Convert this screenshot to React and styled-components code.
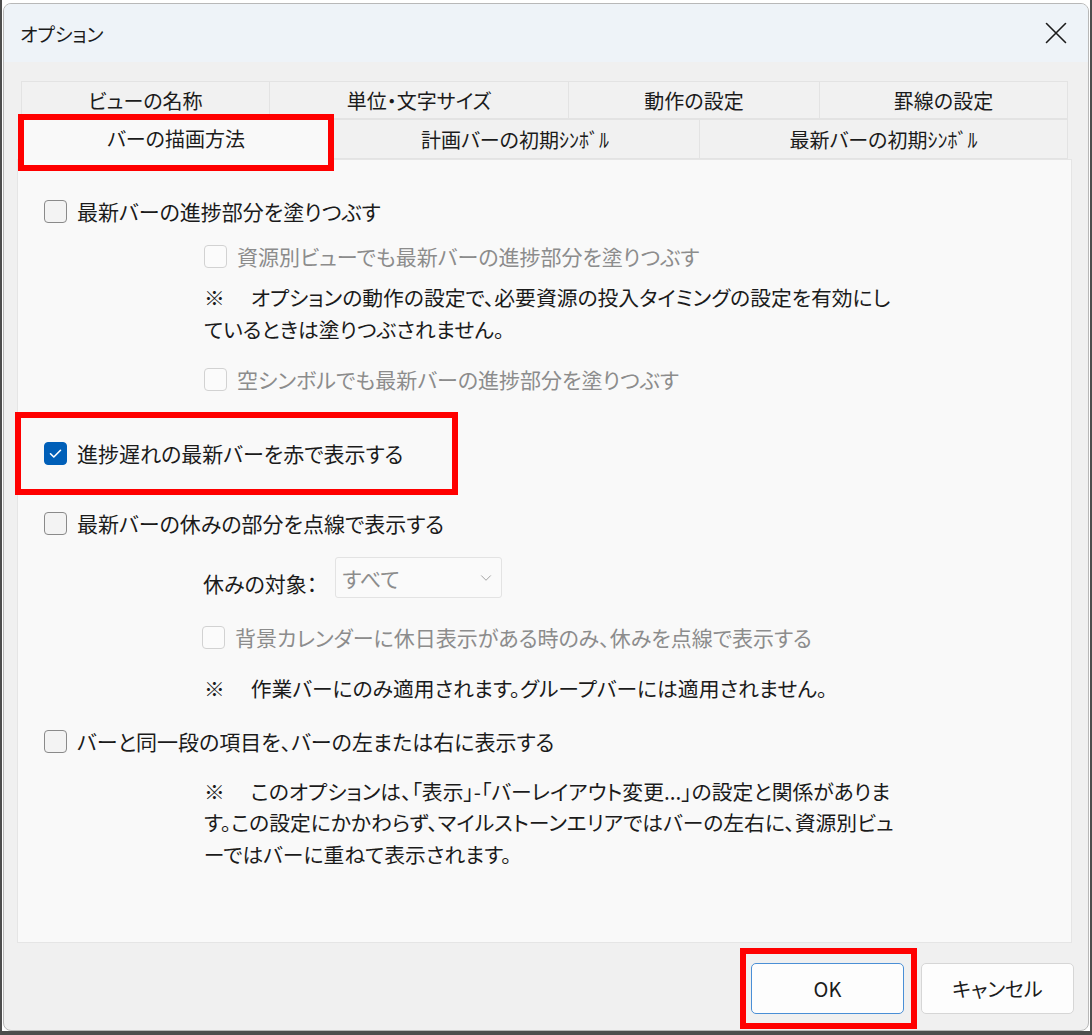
import styled, { createGlobalStyle } from "styled-components"
import { ChevronDown } from "lucide-react"

const GlobalStyle = createGlobalStyle`
    body {
        margin: 0;
        background: #ffffff;
        font-family: "Noto Sans CJK JP", "Noto Sans", sans-serif;
        font-feature-settings: "palt";
        color: #1b1b1b;
    }
`

const rowOneTabs = ["ビューの名称", "単位・文字サイズ", "動作の設定", "罫線の設定"]
const rowTwoTabs = ["バーの描画方法", "計画バーの初期ｼﾝﾎﾞﾙ", "最新バーの初期ｼﾝﾎﾞﾙ"]

function CheckIcon() {
    return (
        <svg width="23" height="23" viewBox="0 0 23 23">
            <path d="M6.5 11.8 L9.8 15 L16.5 8.3" fill="none" stroke="#ffffff" strokeWidth="1.6" strokeLinecap="round" strokeLinejoin="round" />
        </svg>
    )
}

function CheckRow({ label, checked, disabled, indent = 0, mt = 0, children }) {
    return (
        <Row $indent={indent} $mt={mt}>
            <Box $checked={checked} $disabled={disabled}>{checked && <CheckIcon />}</Box>
            <RowLabel $disabled={disabled}>{label}</RowLabel>
            {children}
        </Row>
    )
}

export default function App() {
    return (
        <>
            <GlobalStyle />
            <Frame>
                <Window>
                    <TitleBar>
                        <Title>オプション</Title>
                        <CloseButton>
                            <svg width="22" height="22" viewBox="0 0 22 22">
                                <path d="M1.5 1.5 L20.5 20.5 M20.5 1.5 L1.5 20.5" stroke="#1b1b1b" strokeWidth="1.6" strokeLinecap="round" />
                            </svg>
                        </CloseButton>
                    </TitleBar>
                    <Body>
                        <TabStrip>
                            <TabRow $cols="249px 299px 251px 1fr" $h={38}>
                                {rowOneTabs.map(t => <Tab key={t}>{t}</Tab>)}
                            </TabRow>
                            <TabRow $cols="310px 369px 1fr" $h={40}>
                                {rowTwoTabs.map((t, i) => (
                                    <Tab key={t} $active={i === 0}>
                                        {t}
                                        {i === 0 && <Mark $l={-2} $t={-3} $w={316} $h={57} />}
                                    </Tab>
                                ))}
                            </TabRow>
                        </TabStrip>
                        <Panel>
                            <CheckRow label="最新バーの進捗部分を塗りつぶす" />
                            <CheckRow label="資源別ビューでも最新バーの進捗部分を塗りつぶす" disabled indent={160} mt={22} />
                            <Note $indent={160} $mt={14}>
                                ※<Gap />オプションの動作の設定で、必要資源の投入タイミングの設定を有効にし<br />
                                ているときは塗りつぶされません。
                            </Note>
                            <CheckRow label="空シンボルでも最新バーの進捗部分を塗りつぶす" disabled indent={160} mt={23} />
                            <CheckRow label="進捗遅れの最新バーを赤で表示する" checked mt={51}>
                                <Mark $l={-29} $t={-30} $w={443} $h={83} />
                            </CheckRow>
                            <CheckRow label="最新バーの休みの部分を点線で表示する" mt={47} />
                            <SelectRow>
                                <SelectLabel>休みの対象：</SelectLabel>
                                <Select>
                                    すべて
                                    <ChevronDown size={18} strokeWidth={1.2} color="#9a9a9a" />
                                </Select>
                            </SelectRow>
                            <CheckRow label="背景カレンダーに休日表示がある時のみ、休みを点線で表示する" disabled indent={158} mt={28} />
                            <Note $indent={160} $mt={24}>
                                ※<Gap />作業バーにのみ適用されます。グループバーには適用されません。
                            </Note>
                            <CheckRow label="バーと同一段の項目を、バーの左または右に表示する" mt={25} />
                            <Note $indent={160} $mt={23}>
                                ※<Gap />このオプションは、「表示」-「バーレイアウト変更...」の設定と関係がありま<br />
                                す。この設定にかかわらず、マイルストーンエリアではバーの左右に、資源別ビュ<br />
                                ーではバーに重ねて表示されます。
                            </Note>
                        </Panel>
                    </Body>
                    <Footer>
                        <Button $primary>
                            OK
                            <Mark $l={-12} $t={-16} $w={177} $h={81} />
                        </Button>
                        <Button>キャンセル</Button>
                    </Footer>
                </Window>
            </Frame>
        </>
    )
}

const Frame = styled.div`
    width: 1092px;
    height: 1035px;
    box-sizing: border-box;
    display: flex;
    padding: 3px 1px 0 1px;
    border-left: 2px solid #4d4d4d;
    border-right: 2px solid #4d4d4d;
    border-bottom: 4px solid #4d4d4d;
`
const Window = styled.div`
    flex: 1;
    display: flex;
    flex-direction: column;
    background: #f0f0f0;
    border: 1px solid #b8b8b8;
    border-radius: 8px;
    overflow: hidden;
`
const TitleBar = styled.div`
    height: 58px;
    flex: none;
    display: flex;
    align-items: center;
    justify-content: space-between;
    padding: 0 21px 0 16px;
    background: #eef3f8;
`
const Title = styled.div`
    font-size: 19px;
`
const CloseButton = styled.div`
    width: 22px;
    height: 22px;
    display: flex;
`
const Body = styled.div`
    flex: none;
    padding: 19px 16px 0 13px;
`
const TabStrip = styled.div`
    display: flex;
    flex-direction: column;
`
const TabRow = styled.div`
    display: grid;
    grid-template-columns: ${p => p.$cols};
    height: ${p => p.$h}px;
    margin: 0 4px;
`
const Tab = styled.div`
    position: relative;
    display: flex;
    align-items: center;
    justify-content: center;
    font-size: 20px;
    white-space: nowrap;
    background: ${p => p.$active ? "#f9f9f9" : "#f1f1f1"};
    border: 1px solid #e3e3e3;
    border-bottom: ${p => p.$active ? "none" : "1px solid #e3e3e3"};
    margin: ${p => p.$active ? "-3px -2px -1px -2px" : "0 0 0 -1px"};
    z-index: ${p => p.$active ? 1 : 0};
    &:first-child {
        margin-left: ${p => p.$active ? "-2px" : "0"};
    }
`
const Mark = styled.div`
    position: absolute;
    left: ${p => p.$l}px;
    top: ${p => p.$t}px;
    width: ${p => p.$w}px;
    height: ${p => p.$h}px;
    box-sizing: border-box;
    border: 6px solid #ff0000;
    pointer-events: none;
    z-index: 3;
`
const Panel = styled.div`
    height: 784px;
    box-sizing: border-box;
    background: #f9f9f9;
    border: 1px solid #e5e5e5;
    padding: 40px 0 0 26px;
    display: flex;
    flex-direction: column;
    align-items: flex-start;
`
const Row = styled.div`
    position: relative;
    display: flex;
    align-items: center;
    gap: 10px;
    height: 23px;
    margin-left: ${p => p.$indent}px;
    margin-top: ${p => p.$mt}px;
`
const Box = styled.div`
    width: 23px;
    height: 23px;
    box-sizing: border-box;
    border-radius: 4px;
    flex: none;
    display: flex;
    border: 1px solid ${p => p.$checked ? "#005fb8" : p.$disabled ? "#d2d2d2" : "#8a8a8a"};
    background: ${p => p.$checked ? "#005fb8" : p.$disabled ? "#fbfbfb" : "#f3f3f3"};
    & svg {
        margin: -1px;
    }
`
const RowLabel = styled.span`
    font-size: 21px;
    line-height: 23px;
    white-space: nowrap;
    color: ${p => p.$disabled ? "#8c8c8c" : "#1b1b1b"};
`
const Note = styled.div`
    font-size: 20.8px;
    line-height: 31.5px;
    white-space: nowrap;
    margin-left: ${p => p.$indent}px;
    margin-top: ${p => p.$mt}px;
`
const Gap = styled.span`
    display: inline-block;
    width: 26px;
`
const SelectRow = styled.div`
    display: flex;
    align-items: center;
    gap: 18px;
    margin-left: 159px;
    margin-top: 22px;
    height: 41px;
`
const SelectLabel = styled.span`
    font-size: 21px;
    margin-top: 10px;
`
const Select = styled.div`
    width: 167px;
    height: 41px;
    box-sizing: border-box;
    display: flex;
    align-items: center;
    justify-content: space-between;
    padding: 0 6px 0 6px;
    font-size: 21px;
    color: #8c8c8c;
    background: #fafafa;
    border: 1px solid #e3e3e3;
    border-radius: 3px;
`
const Footer = styled.div`
    flex: 1;
    display: flex;
    justify-content: flex-end;
    align-items: flex-start;
    gap: 17px;
    padding: 20px 14px 0 0;
`
const Button = styled.div`
    position: relative;
    width: 153px;
    height: 51px;
    box-sizing: border-box;
    display: flex;
    align-items: center;
    justify-content: center;
    font-size: 20px;
    background: #fdfdfd;
    border: 1px solid ${p => p.$primary ? "#4a8fd6" : "#d6d6d6"};
    border-radius: 5px;
`
